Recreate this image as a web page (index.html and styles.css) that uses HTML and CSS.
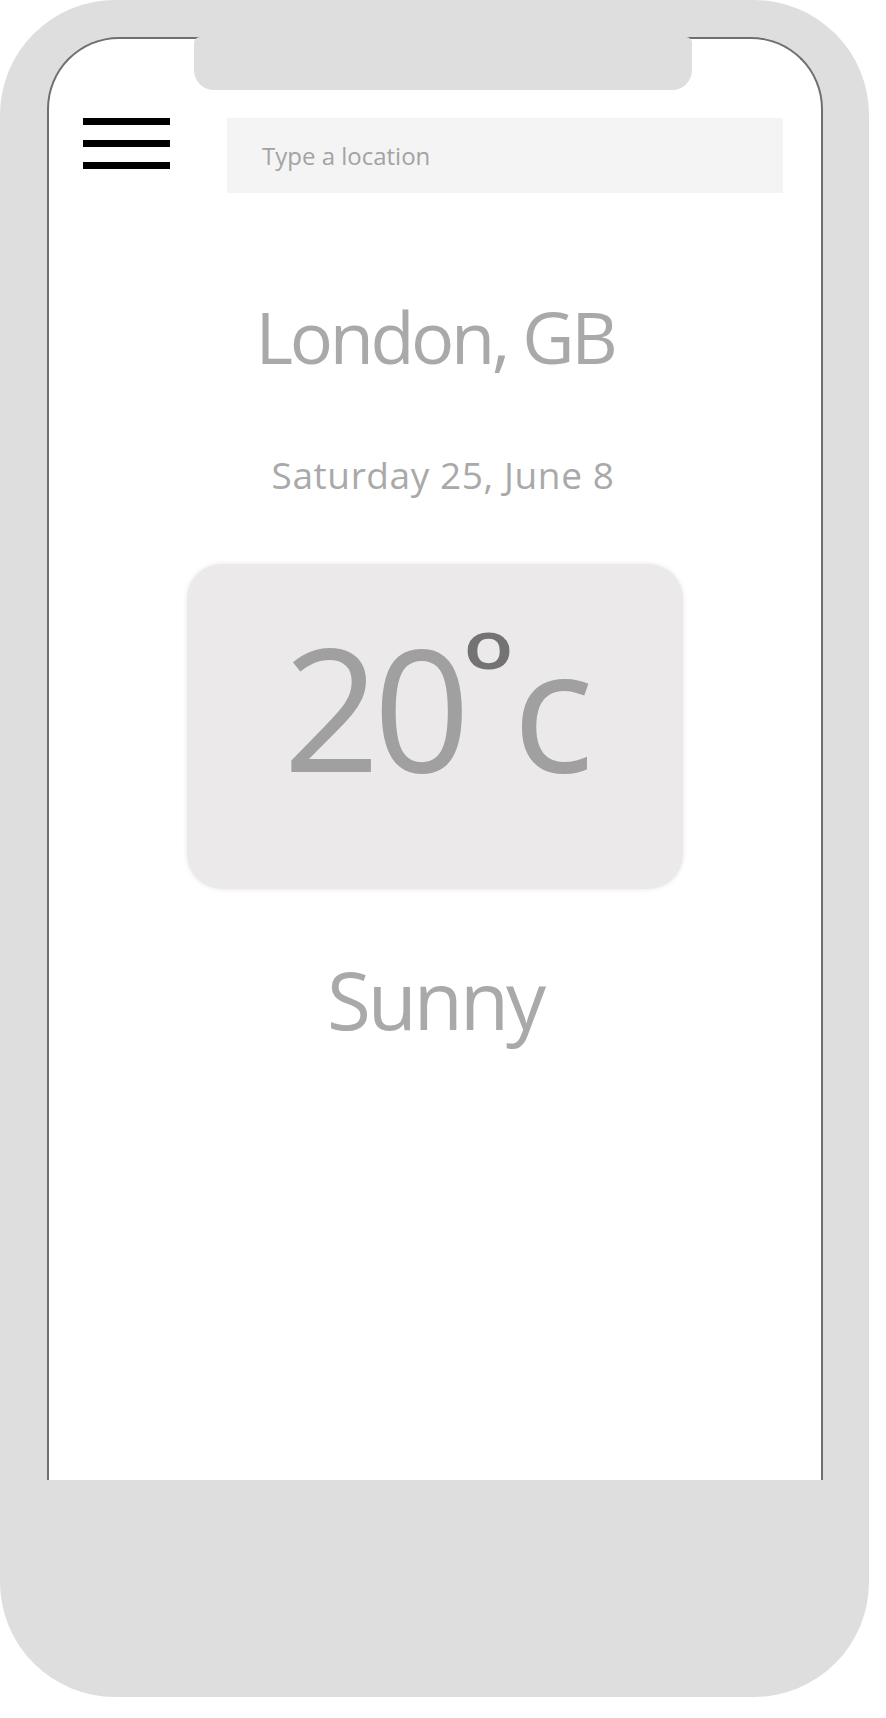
FILE: index.html
```html
<!DOCTYPE html>
<html lang="en">
<head>
<meta charset="utf-8">
<title>Weather</title>
<link rel="stylesheet" href="styles.css">
</head>
<body>
<div class="phone">
  <div class="screen">
    <div class="notch"></div>
    <header class="topbar">
      <button class="menu" aria-label="Menu">
        <span class="bar"></span>
        <span class="bar"></span>
        <span class="bar"></span>
      </button>
      <input class="search" type="text" placeholder="Type a location">
    </header>
    <main class="weather">
      <h1 class="city">London, GB</h1>
      <p class="date">Saturday 25, June 8</p>
      <div class="card">
        <div class="temp">20<span class="deg">o</span>c</div>
      </div>
      <p class="cond">Sunny</p>
    </main>
  </div>
</div>
</body>
</html>
```
FILE: styles.css
```css
* { box-sizing: border-box; }
html, body { margin: 0; padding: 0; background: #ffffff; }
body { font-family: "Open Sans", "Noto Sans", sans-serif; }

.phone {
  width: 869px;
  height: 1697px;
  background: #dedede;
  border-radius: 115px;
  padding: 37px 0 0 47px;
}

.screen {
  position: relative;
  width: 776px;
  height: 1443px;
  background: #ffffff;
  border: 2px solid #6f6f6f;
  border-bottom: none;
  border-radius: 72px 72px 0 0;
}

.notch {
  position: absolute;
  top: -2px;
  left: 145px;
  width: 498px;
  height: 53px;
  background: #dedede;
  border-radius: 6px 6px 20px 20px;
}

.topbar {
  display: flex;
  align-items: flex-start;
  padding: 79px 0 0 34px;
}

.menu {
  display: flex;
  flex-direction: column;
  gap: 15px;
  width: 87px;
  padding: 0;
  margin: 0;
  border: none;
  background: none;
}
.bar {
  display: block;
  width: 87px;
  height: 7px;
  background: #000000;
}

.search {
  margin-left: 57px;
  width: 556px;
  height: 75px;
  border: none;
  outline: none;
  background: #f4f4f4;
  padding: 0 0 0 35px;
  font-family: "Open Sans", "Noto Sans", sans-serif;
  font-size: 24px;
  color: #555;
}
.search::placeholder { color: #a3a3a3; }

.weather {
  display: flex;
  flex-direction: column;
  align-items: center;
  color: #a9a9a9;
}

.city {
  margin: 107px 0 0;
  font-size: 72px;
  font-weight: 400;
  line-height: 1;
  letter-spacing: -3.4px;
}

.date {
  margin: 84px 0 0;
  padding-left: 16px;
  font-size: 37px;
  line-height: 1;
  letter-spacing: 0.6px;
}

.card {
  margin-top: 71px;
  width: 496px;
  height: 325px;
  background: #ebe9ea;
  border-radius: 35px;
  box-shadow: 0 0 5px rgba(0, 0, 0, 0.1);
  display: flex;
  justify-content: center;
  padding-top: 38px;
}

.temp {
  font-size: 170px;
  line-height: 1;
  color: #a0a0a0;
  letter-spacing: -7px;
  white-space: nowrap;
}
.deg {
  display: inline-block;
  font-size: 82px;
  font-weight: 600;
  line-height: 1;
  color: #737373;
  vertical-align: 97px;
  letter-spacing: 0;
  transform: scaleY(0.82);
  margin: 0 -1px 0 0;
}

.cond {
  margin: 70px 0 0;
  font-size: 80px;
  line-height: 1;
  letter-spacing: -3px;
}
```
